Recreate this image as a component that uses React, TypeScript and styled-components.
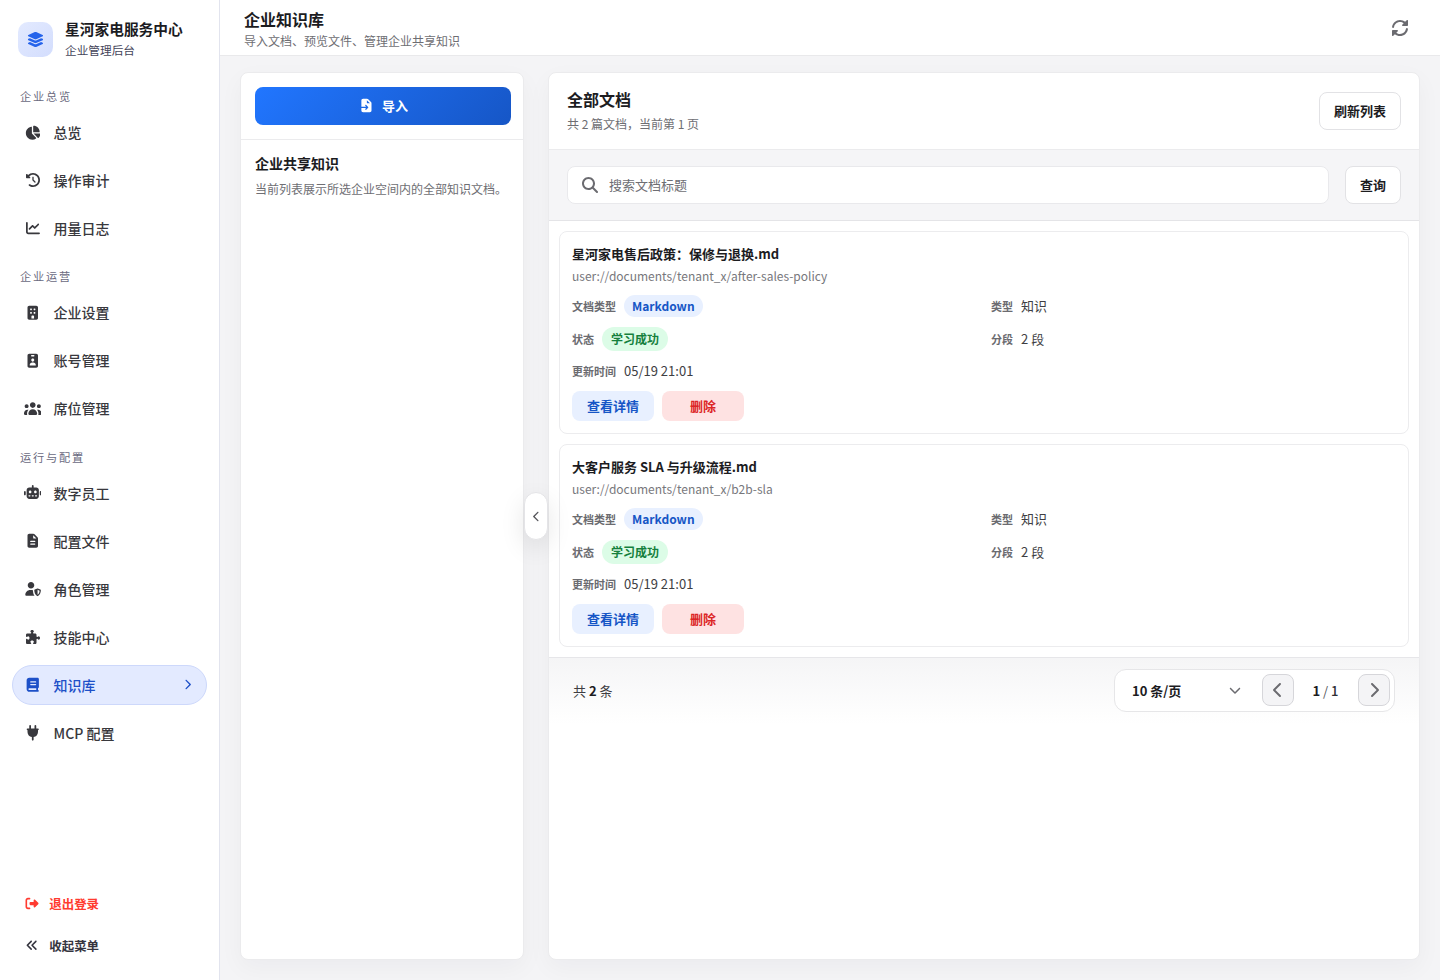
import React from 'react';
import styled, { createGlobalStyle, css } from 'styled-components';
import {
  FaLayerGroup, FaChartPie, FaClockRotateLeft, FaChartLine, FaPuzzlePiece, FaChevronRight, FaChevronLeft,
  FaChevronDown, FaRightFromBracket, FaAnglesLeft, FaMagnifyingGlass,
} from 'react-icons/fa6';

const GlobalStyle = createGlobalStyle`
  * { box-sizing: border-box; }
  body {
    margin: 0;
    font-family: "Noto Sans CJK SC", "Noto Sans", sans-serif;
    color: #1c1c1f;
    background: #f4f4f6;
  }
  button, input { font-family: inherit; }
  button { cursor: pointer; }
  svg { display: block; flex: none; }
`;

/* Solid icons drawn on a 640-unit grid with a 1.25em box */
const Solid = ({ d, size = 14 }: { d: string; size?: number }) => (
  <svg width={size * 1.25} height={size * 1.25} viewBox="0 0 640 640" fill="currentColor" aria-hidden>
    <path fillRule="evenodd" d={d} />
  </svg>
);

const shapes = {
  building:
    'M192 64C156.7 64 128 92.7 128 128L128 512C128 547.3 156.7 576 192 576L448 576C483.3 576 512 547.3 512 512L512 128C512 92.7 483.3 64 448 64L192 64zM304 416L336 416C353.7 416 368 430.3 368 448L368 528L272 528L272 448C272 430.3 286.3 416 304 416zM224 176C224 167.2 231.2 160 240 160L272 160C280.8 160 288 167.2 288 176L288 208C288 216.8 280.8 224 272 224L240 224C231.2 224 224 216.8 224 208L224 176zM368 160L400 160C408.8 160 416 167.2 416 176L416 208C416 216.8 408.8 224 400 224L368 224C359.2 224 352 216.8 352 208L352 176C352 167.2 359.2 160 368 160zM224 304C224 295.2 231.2 288 240 288L272 288C280.8 288 288 295.2 288 304L288 336C288 344.8 280.8 352 272 352L240 352C231.2 352 224 344.8 224 336L224 304zM368 288L400 288C408.8 288 416 295.2 416 304L416 336C416 344.8 408.8 352 400 352L368 352C359.2 352 352 344.8 352 336L352 304C352 295.2 359.2 288 368 288z',
  badge:
    'M192 64C156.7 64 128 92.7 128 128L128 512C128 547.3 156.7 576 192 576L448 576C483.3 576 512 547.3 512 512L512 128C512 92.7 483.3 64 448 64L192 64zM280 112L360 112C373.3 112 384 122.7 384 136C384 149.3 373.3 160 360 160L280 160C266.7 160 256 149.3 256 136C256 122.7 266.7 112 280 112zM320 240C350.9 240 376 265.1 376 296C376 326.9 350.9 352 320 352C289.1 352 264 326.9 264 296C264 265.1 289.1 240 320 240zM208 480C208 426.7 250.7 384 304 384L336 384C389.3 384 432 426.7 432 480C432 488.8 424.8 496 416 496L224 496C215.2 496 208 488.8 208 480z',
  users:
    'M320 80C377.4 80 424 126.6 424 184C424 241.4 377.4 288 320 288C262.6 288 216 241.4 216 184C216 126.6 262.6 80 320 80zM96 152C135.8 152 168 184.2 168 224C168 263.8 135.8 296 96 296C56.2 296 24 263.8 24 224C24 184.2 56.2 152 96 152zM0 480C0 409.3 57.3 352 128 352C140.8 352 153.2 353.9 164.9 357.4C132 394.2 112 442.8 112 496L112 512C112 523.4 114.4 534.2 118.7 544L32 544C14.3 544 0 529.7 0 512L0 480zM521.3 544C525.6 534.2 528 523.4 528 512L528 496C528 442.8 508 394.2 475.1 357.4C486.8 353.9 499.2 352 512 352C582.7 352 640 409.3 640 480L640 512C640 529.7 625.7 544 608 544L521.3 544zM472 224C472 184.2 504.2 152 544 152C583.8 152 616 184.2 616 224C616 263.8 583.8 296 544 296C504.2 296 472 263.8 472 224zM160 496C160 407.6 231.6 336 320 336C408.4 336 480 407.6 480 496L480 512C480 529.7 465.7 544 448 544L192 544C174.3 544 160 529.7 160 512L160 496z',
  robot:
    'M352 64C352 46.3 337.7 32 320 32C302.3 32 288 46.3 288 64L288 128L192 128C139 128 96 171 96 224L96 448C96 501 139 544 192 544L448 544C501 544 544 501 544 448L544 224C544 171 501 128 448 128L352 128L352 64zM160 432C160 418.7 170.7 408 184 408L216 408C229.3 408 240 418.7 240 432C240 445.3 229.3 456 216 456L184 456C170.7 456 160 445.3 160 432zM280 432C280 418.7 290.7 408 304 408L336 408C349.3 408 360 418.7 360 432C360 445.3 349.3 456 336 456L304 456C290.7 456 280 445.3 280 432zM400 432C400 418.7 410.7 408 424 408L456 408C469.3 408 480 418.7 480 432C480 445.3 469.3 456 456 456L424 456C410.7 456 400 445.3 400 432zM224 240C250.5 240 272 261.5 272 288C272 314.5 250.5 336 224 336C197.5 336 176 314.5 176 288C176 261.5 197.5 240 224 240zM368 288C368 261.5 389.5 240 416 240C442.5 240 464 261.5 464 288C464 314.5 442.5 336 416 336C389.5 336 368 314.5 368 288zM64 288C64 270.3 49.7 256 32 256C14.3 256 0 270.3 0 288L0 384C0 401.7 14.3 416 32 416C49.7 416 64 401.7 64 384L64 288zM608 256C590.3 256 576 270.3 576 288L576 384C576 401.7 590.3 416 608 416C625.7 416 640 401.7 640 384L640 288C640 270.3 625.7 256 608 256z',
  file:
    'M128 128C128 92.7 156.7 64 192 64L341.5 64C358.5 64 374.8 70.7 386.8 82.7L493.3 189.3C505.3 201.3 512 217.6 512 234.5L512 512C512 547.3 483.3 576 448 576L192 576C156.7 576 128 547.3 128 512L128 128zM336 122.5L336 216C336 229.3 346.7 240 360 240L453.5 240L336 122.5zM248 320C234.7 320 224 330.7 224 344C224 357.3 234.7 368 248 368L392 368C405.3 368 416 357.3 416 344C416 330.7 405.3 320 392 320L248 320zM248 416C234.7 416 224 426.7 224 440C224 453.3 234.7 464 248 464L392 464C405.3 464 416 453.3 416 440C416 426.7 405.3 416 392 416L248 416z',
  userShield:
    'M256 312C322.3 312 376 258.3 376 192C376 125.7 322.3 72 256 72C189.7 72 136 125.7 136 192C136 258.3 189.7 312 256 312zM226.3 368C127.8 368 48 447.8 48 546.3C48 562.7 61.3 576 77.7 576L386 576C346 526 330 458 328 380C315 372 301 368 286 368L226.3 368zM488.9 309.9C493.6 307.9 499 307.9 503.7 309.9L598 350C608.8 354.6 616.9 365.3 616.8 378.2C616.5 427.1 596.4 547.3 511.8 588C501.7 592.8 490.9 592.8 480.8 588C396.2 547.3 376.2 427.1 376 378.2C375.9 365.3 384 354.6 394.8 350L488.9 309.9zM496.3 360L496.3 540C547.8 512.3 568.3 442.8 568.8 391L496.3 360z',
  book:
    'M480 576L192 576C139 576 96 533 96 480L96 160C96 107 139 64 192 64L496 64C522.5 64 544 85.5 544 112L544 400C544 420.9 530.6 438.7 512 445.3L512 512C529.7 512 544 526.3 544 544C544 561.7 529.7 576 512 576L480 576zM192 448C174.3 448 160 462.3 160 480C160 497.7 174.3 512 192 512L448 512L448 448L192 448zM224 216C224 229.3 234.7 240 248 240L424 240C437.3 240 448 229.3 448 216C448 202.7 437.3 192 424 192L248 192C234.7 192 224 202.7 224 216zM248 288C234.7 288 224 298.7 224 312C224 325.3 234.7 336 248 336L424 336C437.3 336 448 325.3 448 312C448 298.7 437.3 288 424 288L248 288z',
  plug:
    'M224 32C241.7 32 256 46.3 256 64L256 160L384 160L384 64C384 46.3 398.3 32 416 32C433.7 32 448 46.3 448 64L448 160L512 160C529.7 160 544 174.3 544 192C544 209.7 529.7 224 512 224L512 288C512 383.1 442.8 462.1 352 477.3L352 576C352 593.7 337.7 608 320 608C302.3 608 288 593.7 288 576L288 477.3C197.2 462.1 128 383.1 128 288L128 224C110.3 224 96 209.7 96 192C96 174.3 110.3 160 128 160L192 160L192 64C192 46.3 206.3 32 224 32z',
  rotate:
    'M544.1 256L552 256C565.3 256 576 245.3 576 232L576 88C576 78.3 570.2 69.5 561.2 65.8C552.2 62.1 541.9 64.2 535 71L483.3 122.8C439 86.1 382 64 320 64C191 64 84.3 159.4 66.6 283.5C64.1 301 76.2 317.2 93.7 319.7C111.2 322.2 127.4 310 129.9 292.6C143.2 199.5 223.3 128 320 128C364.4 128 405.2 143 437.7 168.3L391 215C384.1 221.9 382.1 232.2 385.8 241.2C389.5 250.2 398.3 256 408 256L544.1 256zM573.5 356.5C576 339 563.8 322.8 546.4 320.3C529 317.8 512.7 330 510.2 347.4C496.9 440.4 416.8 511.9 320.1 511.9C275.7 511.9 234.9 496.9 202.4 471.6L249 425C255.9 418.1 257.9 407.8 254.2 398.8C250.5 389.8 241.7 384 232 384L88 384C74.7 384 64 394.7 64 408L64 552C64 561.7 69.8 570.5 78.8 574.2C87.8 577.9 98.1 575.8 105 569L156.8 517.2C201 553.9 258 576 320 576C449 576 555.7 480.6 573.5 356.5z',
  fileImport:
    'M192 64C156.7 64 128 92.7 128 128L128 368L310.1 368L279.1 337C269.7 327.6 269.7 312.4 279.1 303.1C288.5 293.8 303.7 293.7 313 303.1L385 375.1C394.4 384.5 394.4 399.7 385 409L313 481C303.6 490.4 288.4 490.4 279.1 481C269.8 471.6 269.7 456.4 279.1 447.1L310.1 416.1L128 416.1L128 512.1C128 547.4 156.7 576.1 192 576.1L448 576.1C483.3 576.1 512 547.4 512 512.1L512 234.6C512 217.6 505.3 201.3 493.3 189.3L386.7 82.7C374.7 70.7 358.5 64 341.5 64L192 64zM453.5 240L360 240C346.7 240 336 229.3 336 216L336 122.5L453.5 240z',
};

const Shell = styled.div`
  display: flex;
  height: 980px;
  overflow: hidden;
`;

/* Sidebar */
const Sidebar = styled.aside`
  display: flex;
  flex-direction: column;
  width: 220px;
  flex: none;
  background: #fff;
  border-right: 1px solid #e2e4ee;
`;
const Brand = styled.div`
  display: flex;
  align-items: flex-start;
  gap: 12px;
  height: 60px;
  padding: 22px 18px 0;
`;
const BrandMark = styled.div`
  display: grid;
  place-items: center;
  width: 35px;
  height: 35px;
  padding: 0 1px 1px 0;
  border-radius: 10px;
  background: linear-gradient(135deg, #e3eaff, #d3ddfd);
  color: #2563eb;
  font-size: 17px;
`;
const BrandText = styled.div`
  margin-top: -4px;
`;
const BrandName = styled.div`
  font-size: 14.72px;
  line-height: 22px;
  font-weight: 700;
  color: #1b1b22;
`;
const BrandSub = styled.div`
  font-size: 11.68px;
  line-height: 19px;
  color: #45455a;
`;
const Nav = styled.nav`
  flex: 1;
  padding: 28px 12px 0;
`;
const NavGroup = styled.div`
  margin-bottom: 20px;
`;
const NavLabel = styled.div`
  height: 16px;
  margin-bottom: 8.4px;
  padding-left: 8px;
  font-size: 11.2px;
  line-height: 16px;
  letter-spacing: 1.8px;
  color: #6a6a7e;
`;
const NavItems = styled.div`
  display: flex;
  flex-direction: column;
  gap: 8px;
`;
const NavItem = styled.a<{ $active?: boolean }>`
  display: flex;
  align-items: center;
  height: 40px;
  padding: 0 13.4px 0 9.6px;
  border: 1px solid transparent;
  border-radius: 20px;
  font-size: 14px;
  line-height: 20px;
  font-weight: 500;
  color: #38383d;
  ${(p) => p.$active && css`
    background: #e3eaff;
    border-color: #cdd8fb;
    color: #1d50c8;
  `}
`;
const NavText = styled.span`
  padding-bottom: 0.8px;
`;
const NavIcon = styled.span`
  display: grid;
  place-items: center;
  width: 20px;
  margin-right: 11px;
  font-size: 14px;
`;
const NavArrow = styled.span`
  margin-left: auto;
  padding-bottom: 1px;
  font-size: 11px;
`;
const SideFooter = styled.div`
  display: flex;
  flex-direction: column;
  gap: 10px;
  padding: 0 12px 18px;
`;
const SideAction = styled.a<{ $danger?: boolean }>`
  display: flex;
  align-items: center;
  height: 32px;
  padding-left: 13px;
  font-size: 12.48px;
  font-weight: 600;
  color: ${(p) => (p.$danger ? '#ff3b30' : '#35353f')};
  svg { width: 14px; margin: 0 10.2px 1px 0; }
`;

/* Page frame */
const Page = styled.div`
  display: flex;
  flex-direction: column;
  flex: 1;
  min-width: 0;
`;
const Topbar = styled.header`
  display: flex;
  align-items: center;
  justify-content: space-between;
  height: 56px;
  flex: none;
  padding: 0 30px 0 24px;
  background: #fff;
  border-bottom: 1px solid #e9e9eb;
  svg { color: #6b6b70; }
`;
const PageHeading = styled.div`
  padding-top: 2px;
`;
const PageTitle = styled.h1`
  margin: 0 0 1px;
  font-size: 16px;
  line-height: 24px;
  font-weight: 600;
`;
const Muted = styled.p`
  margin: 0;
  font-size: 12px;
  line-height: 18px;
  color: #6e6e73;
`;
const Workspace = styled.main`
  display: flex;
  flex: 1;
  min-height: 0;
  padding: 16px 20px 20px;
`;
const Panel = styled.section`
  display: flex;
  flex-direction: column;
  background: #fff;
  border: 1px solid #ebebed;
  border-radius: 8px;
  box-shadow: 0 8px 24px rgba(20, 20, 40, 0.04);
  overflow: hidden;
`;
const SidePanel = styled(Panel)`
  width: 284px;
  flex: none;
`;
const MainPanel = styled(Panel)`
  flex: 1;
  min-width: 0;
`;
const ImportArea = styled.div`
  padding: 14px 12px 14px 14px;
  border-bottom: 1px solid #ebebed;
`;
const ImportButton = styled.button`
  display: flex;
  align-items: center;
  justify-content: center;
  gap: 7px;
  width: 100%;
  height: 38px;
  padding: 0 0 1px;
  border: 0;
  border-radius: 8px;
  background: linear-gradient(135deg, #2176ff, #1656c6);
  color: #fff;
  font-size: 13px;
  font-weight: 700;
  span { padding-bottom: 1px; }
`;
const SpaceInfo = styled.div`
  padding: 13px 14px;
`;
const SpaceTitle = styled.h2`
  margin: 0 0 6px;
  font-size: 14px;
  line-height: 21px;
  font-weight: 700;
`;
const Splitter = styled.div`
  display: flex;
  align-items: center;
  width: 24px;
  flex: none;
  z-index: 1;
`;
const CollapseHandle = styled.button`
  display: grid;
  place-items: center;
  width: 24px;
  height: 48px;
  padding: 1px 0 0 0;
  border: 1px solid #e4e4e7;
  border-radius: 12px;
  background: #fff;
  color: #55555a;
  font-size: 11px;
  box-shadow: 0 8px 24px rgba(0, 0, 0, 0.1);
`;

/* Document list */
const ListHeader = styled.div`
  display: flex;
  align-items: center;
  justify-content: space-between;
  height: 77px;
  padding: 0 18px;
  border-bottom: 1px solid #ebebed;
`;
const ListHeading = styled.div`
  padding-bottom: 3px;
`;
const ListTitle = styled.h2`
  margin: 0 0 4px;
  font-size: 16px;
  line-height: 24px;
  font-weight: 700;
`;
const OutlineButton = styled.button`
  height: 38px;
  padding: 0 14px 2px;
  border: 1px solid #e2e2e5;
  border-radius: 8px;
  background: #fff;
  color: #1c1c1f;
  font-size: 13px;
  font-weight: 600;
`;
const SearchBar = styled.div`
  display: flex;
  gap: 16px;
  padding: 16px 18px;
  background: #f5f5f7;
  border-bottom: 1px solid #e4e4e7;
`;
const SearchField = styled.label`
  display: flex;
  align-items: center;
  gap: 10.8px;
  flex: 1;
  height: 38px;
  padding: 0 14.2px;
  border: 1px solid #e9e9ec;
  border-radius: 8px;
  background: #fff;
  color: #6b6b70;
`;
const SearchInput = styled.input`
  flex: 1;
  border: 0;
  padding: 0 0 2px;
  outline: 0;
  background: none;
  font-size: 13px;
  &::placeholder { color: #6e6e73; opacity: 1; }
`;
const Documents = styled.div`
  display: flex;
  flex-direction: column;
  gap: 10px;
  padding: 10px;
  border-bottom: 1px solid #e6e6e9;
`;
const DocCard = styled.article`
  height: 203px;
  padding: 12px;
  border: 1px solid #ececee;
  border-radius: 8px;
`;
const DocTitle = styled.h3`
  margin: 0 0 3px;
  font-size: 13px;
  line-height: 20px;
  font-weight: 700;
`;
const DocPath = styled.p`
  margin: 0 0 11px;
  font-size: 12px;
  line-height: 17px;
  color: #77777c;
`;
const DocFields = styled.div`
  display: grid;
  grid-template-columns: 1fr 1fr;
  grid-template-rows: 22px 24px 20px;
  gap: 10px 14px;
`;
const Field = styled.div`
  display: flex;
  align-items: center;
  gap: 8px;
`;
const FieldLabel = styled.span`
  font-size: 11px;
  font-weight: 600;
  color: #6b6b70;
`;
const FieldValue = styled.span`
  padding-bottom: 2px;
  font-size: 13px;
  color: #3e3e43;
`;
const Tag = styled.span<{ $tone: 'blue' | 'green' }>`
  display: flex;
  align-items: center;
  height: ${(p) => (p.$tone === 'blue' ? 22 : 24)}px;
  padding: 0 ${(p) => (p.$tone === 'blue' ? 8 : 9)}px 2px;
  border-radius: 12px;
  font-size: 12px;
  font-weight: 700;
  background: ${(p) => (p.$tone === 'blue' ? '#e8f0ff' : '#dcfce7')};
  color: ${(p) => (p.$tone === 'blue' ? '#1656c6' : '#15803d')};
`;
const DocActions = styled.div`
  display: flex;
  gap: 8px;
  margin-top: 10px;
`;
const ActionButton = styled.button<{ $danger?: boolean }>`
  width: 82px;
  height: 30px;
  padding: 0 0 2px;
  border: 0;
  border-radius: 8px;
  font-size: 13px;
  font-weight: 600;
  background: ${(p) => (p.$danger ? '#fee2e2' : '#e8f0ff')};
  color: ${(p) => (p.$danger ? '#dc2626' : '#1656c6')};
`;

/* Pagination */
const Pagination = styled.footer`
  display: flex;
  align-items: flex-start;
  justify-content: space-between;
  height: 66px;
  padding: 11px 24px;
  background: linear-gradient(#f5f5f6, #fff);
`;
const Total = styled.span`
  font-size: 13px;
  line-height: 43px;
  color: #3e3e43;
  b { color: #1c1c1f; font-weight: 700; }
`;
const Pager = styled.div`
  display: flex;
  align-items: flex-start;
  width: 281px;
  height: 43px;
  padding: 4px 4px 0 17px;
  border: 1px solid #e6e6e8;
  border-radius: 12px;
  background: #fff;
  font-size: 13px;
  line-height: 33px;
`;
const PageSize = styled.div`
  display: flex;
  align-items: center;
  justify-content: space-between;
  width: 109px;
  margin-right: 21px;
  font-weight: 600;
  svg { margin-bottom: 1px; color: #6b6b70; }
`;
const PageButton = styled.button`
  display: grid;
  place-items: center;
  width: 32px;
  height: 32px;
  padding: 0 1px 0 0;
  border: 1px solid #d6d6da;
  border-radius: 8px;
  background: #f4f4f6;
  color: #6b6b70;
`;
const PageNumber = styled.span`
  width: 64px;
  padding-right: 1px;
  text-align: center;
  color: #55555a;
  b { font-weight: 700; color: #1c1c1f; }
  em { font-style: normal; font-weight: 500; color: #2e2e33; }
`;

type Entry = { label: string; icon: React.ReactNode; active?: boolean };
const groups: { title: string; items: Entry[] }[] = [
  {
    title: '企业总览',
    items: [
      { label: '总览', icon: <FaChartPie size={15.5} /> },
      { label: '操作审计', icon: <FaClockRotateLeft /> },
      { label: '用量日志', icon: <FaChartLine /> },
    ],
  },
  {
    title: '企业运营',
    items: [
      { label: '企业设置', icon: <Solid d={shapes.building} /> },
      { label: '账号管理', icon: <Solid d={shapes.badge} /> },
      { label: '席位管理', icon: <Solid d={shapes.users} /> },
    ],
  },
  {
    title: '运行与配置',
    items: [
      { label: '数字员工', icon: <Solid d={shapes.robot} /> },
      { label: '配置文件', icon: <Solid d={shapes.file} /> },
      { label: '角色管理', icon: <Solid d={shapes.userShield} /> },
      { label: '技能中心', icon: <FaPuzzlePiece /> },
      { label: '知识库', icon: <Solid d={shapes.book} />, active: true },
      { label: 'MCP 配置', icon: <Solid d={shapes.plug} /> },
    ],
  },
];

const documents = [
  { title: '星河家电售后政策：保修与退换.md', path: 'user://documents/tenant_x/after-sales-policy' },
  { title: '大客户服务 SLA 与升级流程.md', path: 'user://documents/tenant_x/b2b-sla' },
];

export default function App() {
  return (
    <Shell>
      <GlobalStyle />
      <Sidebar>
        <Brand>
          <BrandMark><FaLayerGroup /></BrandMark>
          <BrandText>
            <BrandName>星河家电服务中心</BrandName>
            <BrandSub>企业管理后台</BrandSub>
          </BrandText>
        </Brand>
        <Nav>
          {groups.map((group) => (
            <NavGroup key={group.title}>
              <NavLabel>{group.title}</NavLabel>
              <NavItems>
                {group.items.map(({ label, icon, active }) => (
                  <NavItem key={label} $active={active}>
                    <NavIcon>{icon}</NavIcon>
                    <NavText>{label}</NavText>
                    {active && <NavArrow><FaChevronRight /></NavArrow>}
                  </NavItem>
                ))}
              </NavItems>
            </NavGroup>
          ))}
        </Nav>
        <SideFooter>
          <SideAction $danger><FaRightFromBracket size={13} />退出登录</SideAction>
          <SideAction><FaAnglesLeft size={12.5} />收起菜单</SideAction>
        </SideFooter>
      </Sidebar>

      <Page>
        <Topbar>
          <PageHeading>
            <PageTitle>企业知识库</PageTitle>
            <Muted>导入文档、预览文件、管理企业共享知识</Muted>
          </PageHeading>
          <Solid d={shapes.rotate} size={16} />
        </Topbar>
        <Workspace>
          <SidePanel>
            <ImportArea>
              <ImportButton><Solid d={shapes.fileImport} size={13.5} /><span>导入</span></ImportButton>
            </ImportArea>
            <SpaceInfo>
              <SpaceTitle>企业共享知识</SpaceTitle>
              <Muted>当前列表展示所选企业空间内的全部知识文档。</Muted>
            </SpaceInfo>
          </SidePanel>
          <Splitter>
            <CollapseHandle><FaChevronLeft /></CollapseHandle>
          </Splitter>
          <MainPanel>
            <ListHeader>
              <ListHeading>
                <ListTitle>全部文档</ListTitle>
                <Muted>共 2 篇文档，当前第 1 页</Muted>
              </ListHeading>
              <OutlineButton>刷新列表</OutlineButton>
            </ListHeader>
            <SearchBar>
              <SearchField>
                <FaMagnifyingGlass size={16} />
                <SearchInput placeholder="搜索文档标题" />
              </SearchField>
              <OutlineButton>查询</OutlineButton>
            </SearchBar>
            <Documents>
              {documents.map((doc) => (
                <DocCard key={doc.path}>
                  <DocTitle>{doc.title}</DocTitle>
                  <DocPath>{doc.path}</DocPath>
                  <DocFields>
                    <Field><FieldLabel>文档类型</FieldLabel><Tag $tone="blue">Markdown</Tag></Field>
                    <Field><FieldLabel>类型</FieldLabel><FieldValue>知识</FieldValue></Field>
                    <Field><FieldLabel>状态</FieldLabel><Tag $tone="green">学习成功</Tag></Field>
                    <Field><FieldLabel>分段</FieldLabel><FieldValue>2 段</FieldValue></Field>
                    <Field><FieldLabel>更新时间</FieldLabel><FieldValue>05/19 21:01</FieldValue></Field>
                  </DocFields>
                  <DocActions>
                    <ActionButton>查看详情</ActionButton>
                    <ActionButton $danger>删除</ActionButton>
                  </DocActions>
                </DocCard>
              ))}
            </Documents>
            <Pagination>
              <Total>共 <b>2</b> 条</Total>
              <Pager>
                <PageSize>10 条/页<FaChevronDown size={12} /></PageSize>
                <PageButton><FaChevronLeft size={16} /></PageButton>
                <PageNumber><b>1</b> / <em>1</em></PageNumber>
                <PageButton><FaChevronRight size={16} /></PageButton>
              </Pager>
            </Pagination>
          </MainPanel>
        </Workspace>
      </Page>
    </Shell>
  );
}
